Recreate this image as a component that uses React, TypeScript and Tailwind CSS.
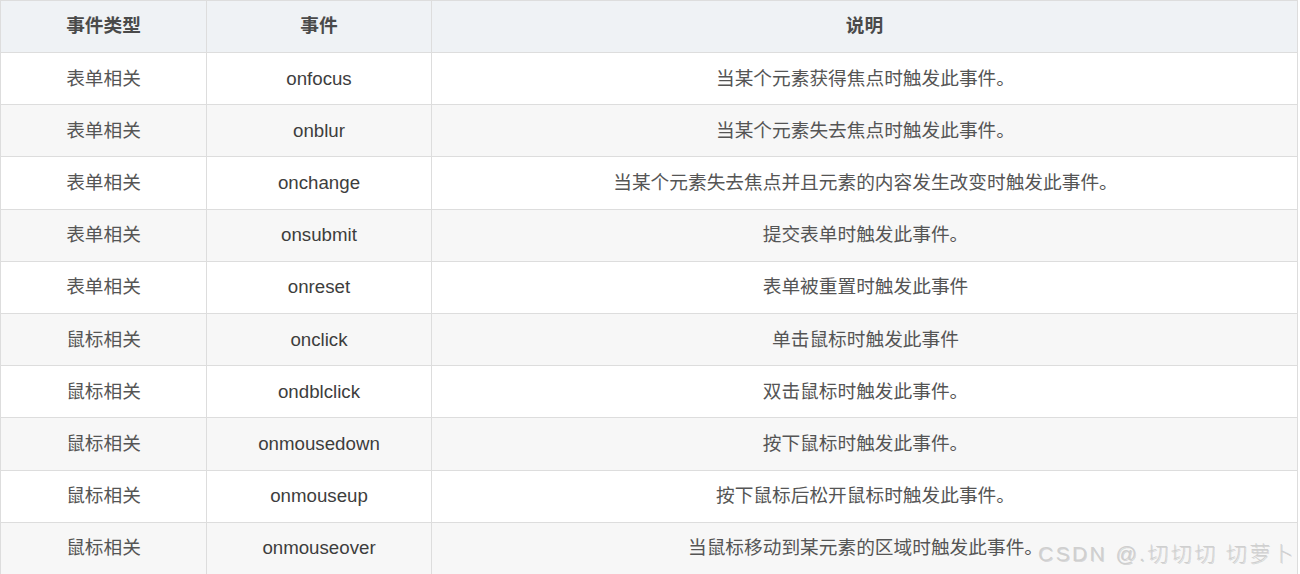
const rows: [string, string, string][] = [
  ["表单相关", "onfocus", "当某个元素获得焦点时触发此事件。"],
  ["表单相关", "onblur", "当某个元素失去焦点时触发此事件。"],
  ["表单相关", "onchange", "当某个元素失去焦点并且元素的内容发生改变时触发此事件。"],
  ["表单相关", "onsubmit", "提交表单时触发此事件。"],
  ["表单相关", "onreset", "表单被重置时触发此事件"],
  ["鼠标相关", "onclick", "单击鼠标时触发此事件"],
  ["鼠标相关", "ondblclick", "双击鼠标时触发此事件。"],
  ["鼠标相关", "onmousedown", "按下鼠标时触发此事件。"],
  ["鼠标相关", "onmouseup", "按下鼠标后松开鼠标时触发此事件。"],
  ["鼠标相关", "onmouseover", "当鼠标移动到某元素的区域时触发此事件。"],
];

export default function App() {
  return (
    <div className="relative w-[1300px] h-[574px] overflow-hidden bg-white font-['Liberation_Sans','Noto_Sans_CJK_SC',sans-serif]">
      <table className="w-[1298px] border-collapse table-fixed text-[18.7px] text-[#4d4d4d]">
        <colgroup>
          <col className="w-[206px]" />
          <col className="w-[225px]" />
          <col />
        </colgroup>
        <thead>
          <tr className="h-[52px] bg-[#eff2f5]">
            <th className="border border-[#dddddd] font-bold text-[#4a4a4a]">事件类型</th>
            <th className="border border-[#dddddd] font-bold text-[#4a4a4a]">事件</th>
            <th className="border border-[#dddddd] font-bold text-[#4a4a4a]">说明</th>
          </tr>
        </thead>
        <tbody>
          {rows.map(([type, name, desc], i) => (
            <tr key={name} className={i % 2 === 1 ? "h-[52.2px] bg-[#f7f7f7]" : "h-[52.2px] bg-white"}>
              <td className="border border-[#dddddd] text-center text-[#555555]">{type}</td>
              <td className="border border-[#dddddd] text-center text-[#3d3d3d]">{name}</td>
              <td className="border border-[#dddddd] pl-[2px] text-center text-[#555555]">{desc}</td>
            </tr>
          ))}
        </tbody>
      </table>
      <div className="absolute right-[4px] bottom-[10px] text-[21px] leading-none tracking-[2.4px] font-light text-[#cfcfcf] [text-shadow:1px_1px_0_rgba(0,0,0,0.12)]">
        CSDN @.切切切 切萝卜
      </div>
    </div>
  );
}
